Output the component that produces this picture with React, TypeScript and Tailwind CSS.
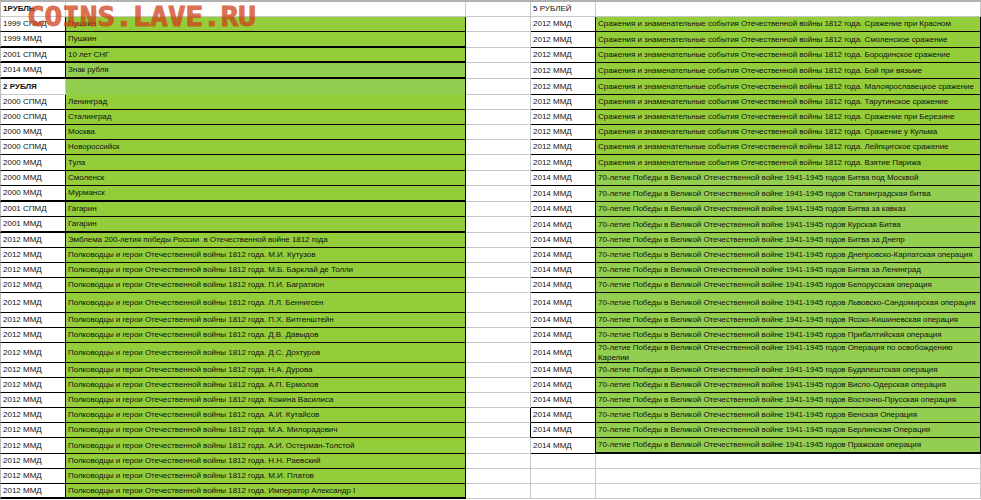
type Row = {
  h: string;
  year: string;
  title?: string;
  rightYear?: string;
  rightTitle?: string;
  bold?: boolean;
  leftThick?: boolean;
  light?: boolean;
  boxed?: boolean;
};

const hero = "Полководцы и герои Отечественной войны 1812 года. ";
const battle = "Сражения и знаменательные события Отечественной войны 1812 года. ";
const victory = "70-летие Победы в Великой Отечественной войне 1941-1945 годов ";

const rows: Row[] = [
  { h: "h-[15px]", year: "1РУБЛЬ", bold: true, rightYear: "5 РУБЛЕЙ" },
  { h: "h-[15px]", year: "1999 СПМД", title: "Пушкин", rightYear: "2012 ММД", rightTitle: battle + "Сражение при Красном" },
  { h: "h-[16px]", year: "1999 ММД", title: "Пушкин", leftThick: true, rightYear: "2012 ММД", rightTitle: battle + "Смоленское сражение" },
  { h: "h-[15px]", year: "2001 СПМД", title: "10 лет СНГ", leftThick: true, rightYear: "2012 ММД", rightTitle: battle + "Бородинское сражение" },
  { h: "h-[16px]", year: "2014 ММД", title: "Знак рубля", leftThick: true, light: true, rightYear: "2012 ММД", rightTitle: battle + "Бой при вязьме" },
  { h: "h-[16px]", year: "2 РУБЛЯ", bold: true, title: "", light: true, rightYear: "2012 ММД", rightTitle: battle + "Малоярославецкое сражение" },
  { h: "h-[15px]", year: "2000 СПМД", title: "Ленинград", rightYear: "2012 ММД", rightTitle: battle + "Тарутинское сражение" },
  { h: "h-[15px]", year: "2000 СПМД", title: "Сталинград", rightYear: "2012 ММД", rightTitle: battle + "Сражение при Березине" },
  { h: "h-[15px]", year: "2000 ММД", title: "Москва", rightYear: "2012 ММД", rightTitle: battle + "Сражение у Кульма" },
  { h: "h-[15px]", year: "2000 СПМД", title: "Новороссийск", rightYear: "2012 ММД", rightTitle: battle + "Лейпцигское сражение" },
  { h: "h-[16px]", year: "2000 ММД", title: "Тула", rightYear: "2012 ММД", rightTitle: battle + "Взятие Парижа" },
  { h: "h-[15px]", year: "2000 ММД", title: "Смоленск", rightYear: "2014 ММД", rightTitle: victory + "Битва под Москвой" },
  { h: "h-[16px]", year: "2000 ММД", title: "Мурманск", leftThick: true, rightYear: "2014 ММД", rightTitle: victory + "Сталинградская битва" },
  { h: "h-[15px]", year: "2001 СПМД", title: "Гагарин", rightYear: "2014 ММД", rightTitle: victory + "Битва за кавказ" },
  { h: "h-[16px]", year: "2001 ММД", title: "Гагарин", leftThick: true, rightYear: "2014 ММД", rightTitle: victory + "Курская Битва" },
  { h: "h-[15px]", year: "2012 ММД", title: "Эмблема 200-летия победы России  в Отечественной войне 1812 года", rightYear: "2014 ММД", rightTitle: victory + "Битва за Днепр" },
  { h: "h-[15px]", year: "2012 ММД", title: hero + "М.И. Кутузов", rightYear: "2014 ММД", rightTitle: victory + "Днепровско-Карпатская операция" },
  { h: "h-[15px]", year: "2012 ММД", title: hero + "М.Б. Барклай де Толли", rightYear: "2014 ММД", rightTitle: victory + "Битва за Ленинград" },
  { h: "h-[15px]", year: "2012 ММД", title: hero + "П.И. Багратион", rightYear: "2014 ММД", rightTitle: victory + "Белорусская операция" },
  { h: "h-[20px]", year: "2012 ММД", title: hero + "Л.Л. Беннигсен", rightYear: "2014 ММД", rightTitle: victory + "Львовско-Сандомирская операция" },
  { h: "h-[15px]", year: "2012 ММД", title: hero + "П.Х. Витгенштейн", rightYear: "2014 ММД", rightTitle: victory + "Ясско-Кишиневская операция" },
  { h: "h-[15px]", year: "2012 ММД", title: hero + "Д.В. Давыдов", rightYear: "2014 ММД", rightTitle: victory + "Прибалтийская операция" },
  { h: "h-[20px]", year: "2012 ММД", title: hero + "Д.С. Дохтуров", rightYear: "2014 ММД", rightTitle: victory + "Операция по освобождению Карелии" },
  { h: "h-[15px]", year: "2012 ММД", title: hero + "Н.А. Дурова", rightYear: "2014 ММД", rightTitle: victory + "Будапештская операция" },
  { h: "h-[15px]", year: "2012 ММД", title: hero + "А.П. Ермолов", rightYear: "2014 ММД", rightTitle: victory + "Висло-Одерская операция" },
  { h: "h-[15px]", year: "2012 ММД", title: hero + "Кожина Василиса", rightYear: "2014 ММД", rightTitle: victory + "Восточно-Прусская операция" },
  { h: "h-[15px]", year: "2012 ММД", title: hero + "А.И. Кутайсов", boxed: true, rightYear: "2014 ММД", rightTitle: victory + "Венская Операция" },
  { h: "h-[15px]", year: "2012 ММД", title: hero + "М.А. Милорадович", boxed: true, rightYear: "2014 ММД", rightTitle: victory + "Берлинская Операция" },
  { h: "h-[16px]", year: "2012 ММД", title: hero + "А.И. Остерман-Толстой", rightYear: "2014 ММД", rightTitle: victory + "Пражская операция" },
  { h: "h-[15px]", year: "2012 ММД", title: hero + "Н.Н. Раевский" },
  { h: "h-[15px]", year: "2012 ММД", title: hero + "М.И. Платов" },
  { h: "h-[15px]", year: "2012 ММД", title: hero + "Император Александр I" },
];

function SheetRow({ row, index }: { row: Row; index: number }) {
  const isHeader = index === 0;
  const noGreenLeft = row.title === undefined;
  const lastLeft = index === rows.length - 1;
  const rightLast = !!row.rightTitle?.endsWith("Пражская операция");
  const isVictory = !!row.rightTitle?.startsWith("70-летие");

  return (
    <div className={`flex ${row.h}`}>
      <div
        className={`w-[66px] shrink-0 border-l border-l-[#bbbbbb] pl-[2px] flex items-center border-r ${
          isHeader || row.bold ? "border-r-[#c8c8c8]" : "border-r-black"
        } ${isHeader || row.bold ? "border-b border-b-[#c8c8c8]" : row.leftThick || lastLeft ? "border-b-2 border-b-black" : "border-b border-b-black"} ${
          row.bold ? "font-bold" : ""
        }`}
      >
        {row.year}
      </div>
      <div
        className={`w-[400px] shrink-0 pl-[2px] flex items-center whitespace-pre tracking-[-0.05px] border-r ${
          isHeader ? "border-r-[#c8c8c8] border-b border-b-[#c8c8c8] bg-white" : "border-r-black"
        } ${row.light ? "bg-[#93ce51]" : !isHeader ? "bg-[#93cd3a]" : ""} ${
          row.bold && !isHeader ? "" : !isHeader ? (row.leftThick || lastLeft ? "border-b-2 border-b-black" : "border-b border-b-black") : ""
        }`}
      >
        {noGreenLeft ? null : row.title}
      </div>
      <div className={`w-[65px] shrink-0 border-r border-b border-b-[#c8c8c8] ${row.boxed ? "border-r-black" : "border-r-[#c8c8c8]"}`} />
      <div
        className={`w-[65px] shrink-0 pl-[2px] flex items-center border-r border-b ${
          row.rightTitle ? "border-r-black border-b-black" : "border-r-[#c8c8c8] border-b-[#c8c8c8]"
        }`}
      >
        {row.rightYear}
      </div>
      <div
        className={`w-[385px] shrink-0 pl-[2px] flex items-center border-r leading-[10px] tracking-[-0.05px] ${
          row.rightTitle ? "border-r-black" : "border-r-[#c8c8c8]"
        } ${isVictory ? "bg-[#93ce51]" : row.rightTitle ? "bg-[#93cd3a]" : ""} ${
          rightLast ? "border-b-2 border-b-black" : row.rightTitle ? "border-b border-b-black" : "border-b border-b-[#c8c8c8]"
        }`}
      >
        {row.rightTitle}
      </div>
    </div>
  );
}

export default function App() {
  return (
    <div className="relative w-[981px] h-[500px] overflow-hidden bg-white font-['Liberation_Sans',sans-serif] text-[8px] text-[#111111] border-t-2 border-t-[#b0b0b0]">
      {rows.map((row, i) => (
        <SheetRow key={i} row={row} index={i} />
      ))}
      {/* forum watermark */}
      <div className="absolute left-[27px] top-[-3px] origin-left scale-x-[1.125] font-['DejaVu_Sans_Mono',monospace] font-bold text-[26px] leading-[36px] text-[#d0421a] opacity-75 [-webkit-text-stroke:1px_#d0421a] whitespace-nowrap">
        COINS.LAVE.RU
      </div>
    </div>
  );
}
